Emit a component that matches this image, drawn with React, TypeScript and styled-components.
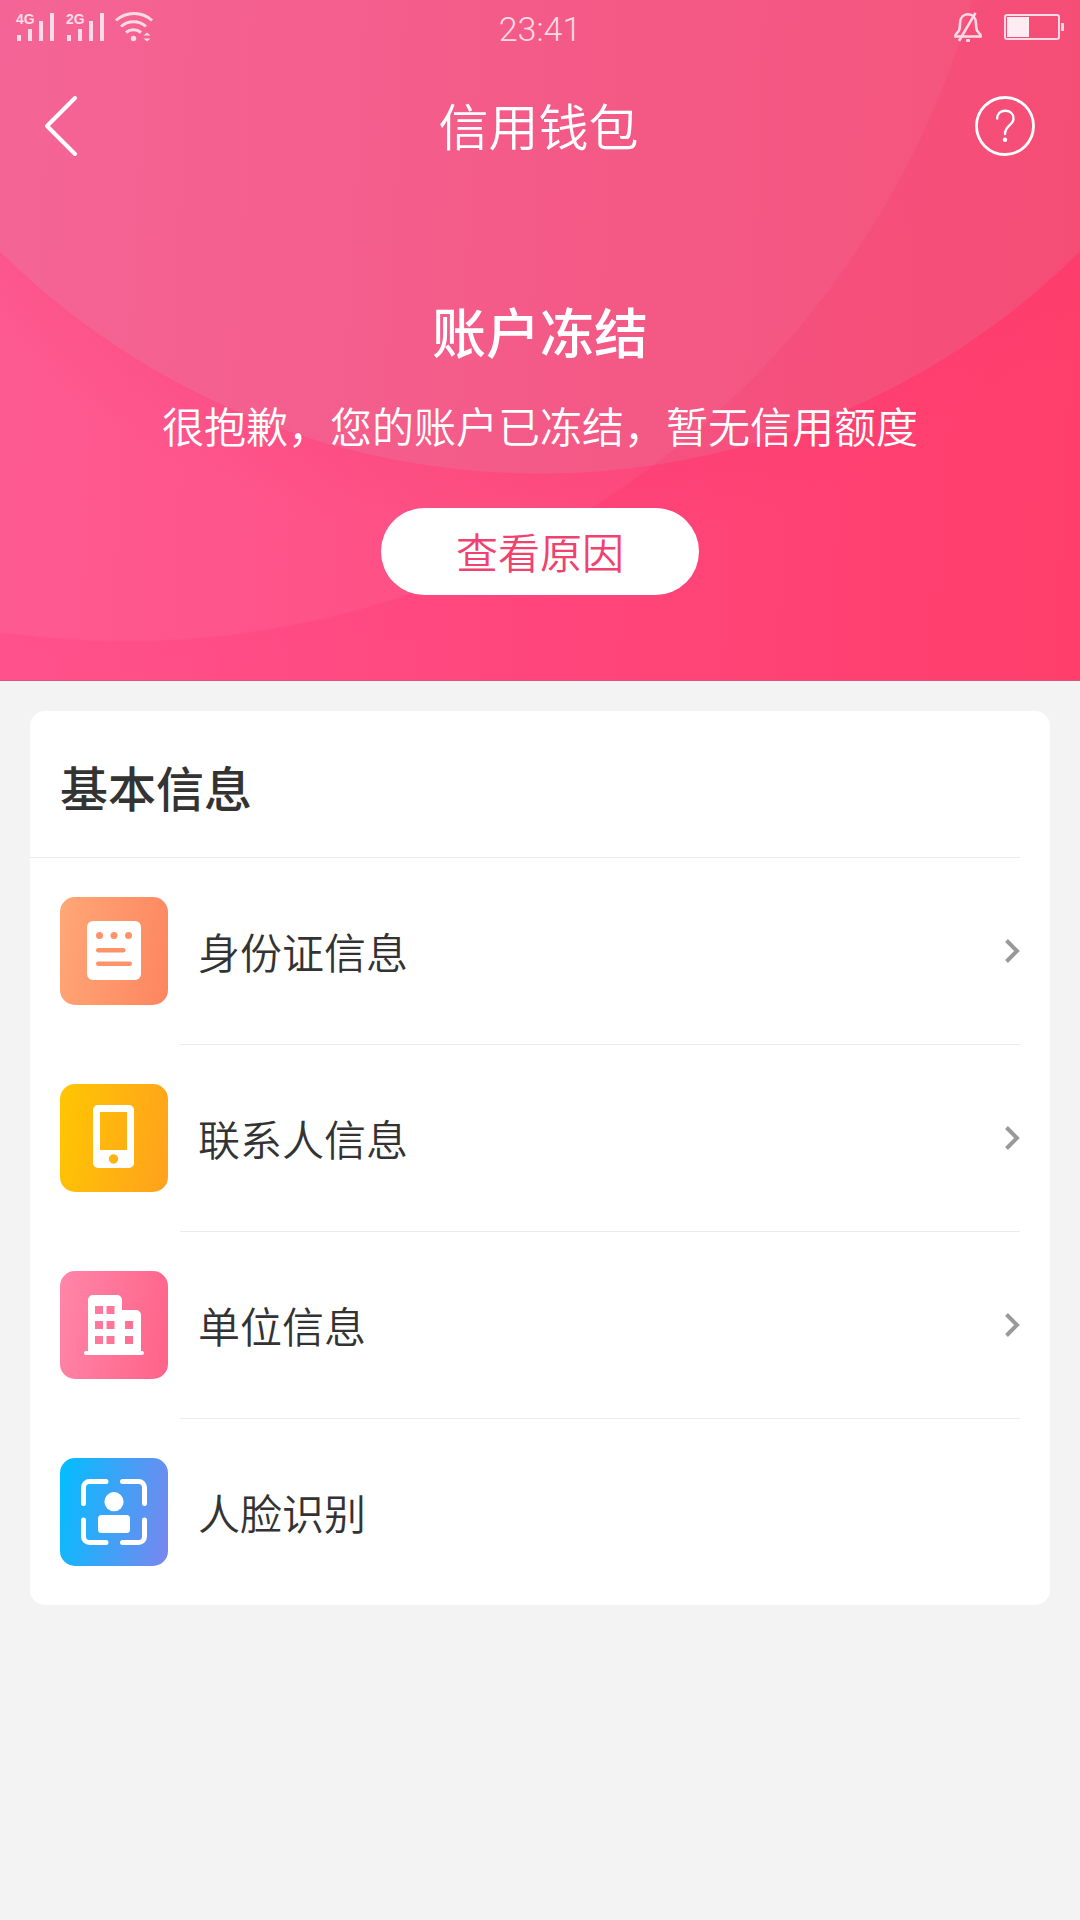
import React from 'react';
import styled, { createGlobalStyle } from 'styled-components';

const GlobalStyle = createGlobalStyle`
  *, *::before, *::after { box-sizing: border-box; }
  body {
    margin: 0;
    background: #f3f3f3;
    color: #333;
    font-family: Roboto, "Noto Sans CJK SC", sans-serif;
  }
`;

const Hero = styled.header`
  border-bottom: 1px solid #d5587f;
  background:
    radial-gradient(
      circle 900px at 50% -294px,
      rgba(195, 150, 165, 0.17) 767px,
      rgba(240, 50, 105, 0.12) 768px,
      rgba(240, 50, 105, 0) 840px
    ),
    radial-gradient(
      circle 1000px at 126px -238px,
      rgba(240, 170, 195, 0.08) 878px,
      rgba(255, 60, 125, 0.08) 880px,
      rgba(255, 60, 125, 0) 940px
    ),
    linear-gradient(93deg, #ff548f 0%, #ff467c 50%, #ff3e6b 100%);
  color: #fff;
`;

const StatusBar = styled.div`
  display: grid;
  grid-template-columns: 1fr auto 1fr;
  align-items: center;
  height: 54px;
  padding: 0 16px;
  color: #ffdbe6;
`;

const StatusGroup = styled.div<{ $gap: number; $end?: boolean }>`
  display: flex;
  align-items: center;
  justify-content: ${(p) => (p.$end ? 'flex-end' : 'flex-start')};
  gap: ${(p) => p.$gap}px;

  svg { display: block; overflow: visible; }
`;

const SignalLabel = styled.text`
  font: bold 14px/16px "Liberation Sans", sans-serif;
  fill: currentColor;
`;

const Clock = styled.time`
  padding-top: 4px;
  font-size: 34px;
  font-weight: 300;
  line-height: 40px;
`;

const NavBar = styled.nav`
  display: grid;
  grid-template-columns: 1fr auto 1fr;
  align-items: center;
  height: 144px;
  padding: 0 45px 0 42px;
`;

const PageTitle = styled.h1`
  margin: 0;
  padding-top: 6px;
  font-size: 50px;
  font-weight: 350;
  line-height: 72px;
`;

const IconButton = styled.button<{ $end?: boolean }>`
  display: flex;
  justify-self: ${(p) => (p.$end ? 'end' : 'start')};
  padding: 0;
  border: 0;
  background: none;
  color: inherit;
  cursor: pointer;
`;

const Notice = styled.section`
  display: flex;
  flex-direction: column;
  align-items: center;
  padding: 99px 24px 85px;
  text-align: center;
`;

const NoticeTitle = styled.h2`
  margin: 0;
  font-size: 54px;
  font-weight: 500;
  line-height: 78px;
`;

const NoticeText = styled.p`
  margin: 22px 0 47px;
  font-size: 42px;
  font-weight: 350;
  line-height: 64px;
`;

const ReasonButton = styled.button`
  height: 87px;
  padding: 6px 75px 0;
  border: 0;
  border-radius: 44px;
  background: #fff;
  color: #f0416f;
  font-family: inherit;
  font-size: 42px;
  font-weight: 350;
  line-height: 80px;
  cursor: pointer;
`;

const Card = styled.section`
  margin: 30px;
  border-radius: 15px;
  background: #fff;
`;

const CardTitle = styled.h2`
  margin: 0 30px 0 0;
  padding: 44px 0 30px 30px;
  border-bottom: 1px solid #ebebeb;
  font-size: 48px;
  font-weight: 500;
  line-height: 72px;
`;

const List = styled.ul`
  margin: 0;
  padding: 0;
  list-style: none;
`;

const RowLink = styled.a`
  display: flex;
  gap: 12px;
  padding: 0 30px;
  color: inherit;
  text-decoration: none;
`;

const RowBody = styled.span<{ $last: boolean }>`
  display: flex;
  flex: 1;
  align-items: center;
  justify-content: space-between;
  height: ${(p) => (p.$last ? 186 : 187)}px;
  padding-left: 18px;
  border-bottom: ${(p) => (p.$last ? '0' : '1px solid #ebebeb')};
`;

const RowLabel = styled.span`
  padding-top: 8px;
  font-size: 42px;
  font-weight: 350;
  line-height: 60px;
`;

const Tile = styled.span<{ $from: string; $to: string }>`
  flex: none;
  width: 108px;
  height: 108px;
  margin-top: 39px;
  border-radius: 15px;
  background: linear-gradient(100deg, ${(p) => p.$from}, ${(p) => p.$to});

  svg { display: block; }
`;

function Signal({ label }: { label: string }) {
  return (
    <svg width="38" height="38" viewBox="0 0 38 38" fill="currentColor">
      <SignalLabel x="0" y="16">{label}</SignalLabel>
      <rect x="1" y="27" width="4" height="6" />
      <rect x="12" y="21" width="4" height="12" />
      <rect x="23" y="13" width="4" height="20" />
      <rect x="34" y="5" width="4" height="28" />
    </svg>
  );
}

function Wifi() {
  return (
    <svg width="38" height="30" viewBox="0 0 38 30" fill="none" stroke="currentColor" strokeWidth="3">
      <path d="M0 8.500C10 -.8 26 -.8 36 8.500" />
      <path d="M5 14.500C12 8 23 8 30 14.500" />
      <path d="M10 20.500C14.500 16.700 20.500 16.700 25 20.500" />
      <circle cx="17.500" cy="26.500" r="2.700" fill="currentColor" stroke="none" />
      <path d="M27.500 23.500 31 20.500 34.500 23.500ZM27.500 26.500 31 29.500 34.500 26.500Z" fill="currentColor" stroke="none" />
    </svg>
  );
}

function BellOff() {
  return (
    <svg width="28" height="30" viewBox="0 0 28 30" fill="none" stroke="currentColor" strokeWidth="2.6">
      <path d="M1.500 24.500H26.500V23L23 18.500C22 16.500 22 14 22 11.500 22 5.500 18.500 2.300 14 2.300S6 5.500 6 11.500C6 14 6 16.500 5 18.500L1.500 23Z" />
      <path d="M21.500 .8 5 29" />
      <rect x="12" y="27" width="4" height="3" rx="1" fill="currentColor" stroke="none" />
    </svg>
  );
}

function Battery() {
  return (
    <svg width="60" height="26" viewBox="0 0 60 26" fill="currentColor">
      <rect x="1" y="1" width="54" height="24" rx="2" fill="none" stroke="currentColor" strokeWidth="2" />
      <rect x="3" y="3" width="22" height="20" fill="#fdecf1" />
      <rect x="57" y="9" width="3" height="8" />
    </svg>
  );
}

function BackIcon() {
  return (
    <svg width="36" height="62" viewBox="0 0 36 62" fill="none" stroke="currentColor" strokeWidth="4" strokeLinecap="round" strokeLinejoin="round">
      <path d="M33 3 5 31 33 59" />
    </svg>
  );
}

function HelpIcon() {
  return (
    <svg width="60" height="60" viewBox="6 1 60 60" fill="none" stroke="currentColor" strokeLinecap="round">
      <circle cx="36" cy="31" r="28.500" strokeWidth="2.800" />
      <path d="M28.200 23.500C28.200 18.500 31.500 15.800 36.300 15.800 41 15.800 44.500 18.500 44.500 23.500 44.500 30 36 30.500 36 39" strokeWidth="2.400" />
      <circle cx="36" cy="44.800" r="2.200" fill="currentColor" stroke="none" />
    </svg>
  );
}

function Chevron() {
  return (
    <svg width="16" height="26" viewBox="0 0 16 26" fill="none" stroke="#999" strokeWidth="4">
      <path d="M2.500 2.500 13 13 2.500 23.500" />
    </svg>
  );
}

function IdCardIcon() {
  return (
    <svg width="108" height="108" viewBox="0 0 108 108">
      <rect x="27" y="24" width="54" height="59" rx="6" fill="#fff" />
      <g fill="#fd9367">
        <circle cx="39.500" cy="38.500" r="3.500" />
        <circle cx="54" cy="38.500" r="3.500" />
        <circle cx="68.500" cy="38.500" r="3.500" />
        <rect x="36" y="51" width="29.500" height="4.500" rx="2.200" />
        <rect x="36" y="64.500" width="36" height="4.500" rx="2.200" />
      </g>
    </svg>
  );
}

function PhoneIcon() {
  return (
    <svg width="108" height="108" viewBox="0 0 108 108" fill="#fff" fillRule="evenodd">
      <path d="M38 21H69A5 5 0 0 1 74 26V79A5 5 0 0 1 69 84H38A5 5 0 0 1 33 79V26A5 5 0 0 1 38 21ZM40 28V66H67V28ZM53.500 70.300A4.700 4.700 0 1 0 53.500 79.700 4.700 4.700 0 1 0 53.500 70.300Z" />
    </svg>
  );
}

function BuildingIcon() {
  return (
    <svg width="108" height="108" viewBox="0 0 108 108" fill="#fff" fillRule="evenodd">
      <path d="M28 81V29A5 5 0 0 1 33 24H57A5 5 0 0 1 62 29V39H76A5 5 0 0 1 81 44V81ZM35 35V43H43V35ZM46.500 35V43H54.500V35ZM35 50V58H43V50ZM46.500 50V58H54.500V50ZM65 50V58H73V50ZM35 65V73H43V65ZM46.500 65V73H54.500V65ZM65 65V73H73V65Z" />
      <rect x="24" y="80" width="60" height="4" rx="2" />
    </svg>
  );
}

function FaceIcon() {
  return (
    <svg width="108" height="108" viewBox="0 0 108 108" fill="#fff">
      <path
        d="M23.500 45.500V29.500A6 6 0 0 1 29.500 23.500H46M62.500 23.500H78.500A6 6 0 0 1 84.500 29.500V45.500M84.500 62V78.500A6 6 0 0 1 78.500 84.500H62.500M46 84.500H29.500A6 6 0 0 1 23.500 78.500V62"
        fill="none"
        stroke="#fff"
        strokeWidth="5"
        strokeLinecap="round"
      />
      <circle cx="54" cy="43.700" r="9.600" />
      <rect x="38" y="57" width="32" height="18" rx="3.500" />
    </svg>
  );
}

const rows = [
  { id: 'identity', label: '身份证信息', from: '#ffa777', to: '#fd855f', icon: <IdCardIcon />, arrow: true },
  { id: 'contact', label: '联系人信息', from: '#ffc602', to: '#ffa11d', icon: <PhoneIcon />, arrow: true },
  { id: 'company', label: '单位信息', from: '#ff86a9', to: '#ff6288', icon: <BuildingIcon />, arrow: true },
  { id: 'face', label: '人脸识别', from: '#01beff', to: '#7a86ee', icon: <FaceIcon />, arrow: false },
];

export default function App() {
  return (
    <>
      <GlobalStyle />
      <Hero>
        <StatusBar>
          <StatusGroup $gap={12}>
            <Signal label="4G" />
            <Signal label="2G" />
            <Wifi />
          </StatusGroup>
          <Clock>23:41</Clock>
          <StatusGroup $gap={22} $end>
            <BellOff />
            <Battery />
          </StatusGroup>
        </StatusBar>
        <NavBar>
          <IconButton type="button" aria-label="返回"><BackIcon /></IconButton>
          <PageTitle>信用钱包</PageTitle>
          <IconButton type="button" aria-label="帮助" $end><HelpIcon /></IconButton>
        </NavBar>
        <Notice>
          <NoticeTitle>账户冻结</NoticeTitle>
          <NoticeText>很抱歉，您的账户已冻结，暂无信用额度</NoticeText>
          <ReasonButton type="button">查看原因</ReasonButton>
        </Notice>
      </Hero>
      <main>
        <Card>
          <CardTitle>基本信息</CardTitle>
          <List>
            {rows.map((row, i) => (
              <li key={row.id}>
                <RowLink href={`#${row.id}`}>
                  <Tile $from={row.from} $to={row.to}>{row.icon}</Tile>
                  <RowBody $last={i === rows.length - 1}>
                    <RowLabel>{row.label}</RowLabel>
                    {row.arrow && <Chevron />}
                  </RowBody>
                </RowLink>
              </li>
            ))}
          </List>
        </Card>
      </main>
    </>
  );
}
